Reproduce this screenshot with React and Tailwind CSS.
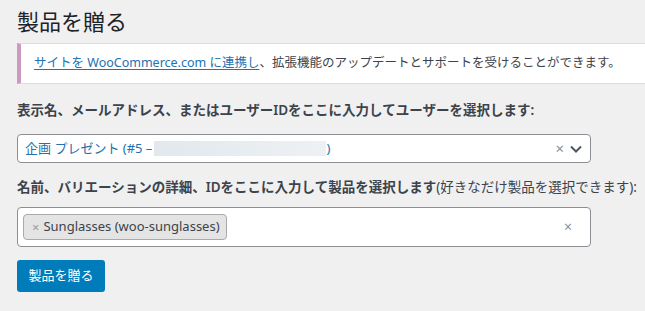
export default function App() {
  const font = { fontFamily: '"Noto Sans", "Noto Sans CJK JP", sans-serif' };

  return (
    <div
      className="w-[645px] h-[311px] overflow-hidden bg-[#f0f0f1] pl-[17px] flex flex-col items-start text-[#1d2327]"
      style={font}
    >
      <h1 className="mt-[7px] text-[22px] leading-[28px] font-normal text-[#1d2327]">製品を贈る</h1>

      <div className="mt-[8px] w-[650px] h-[41px] bg-white border-y border-[#dcdcde] border-l-4 border-l-[#cc99c2] flex items-center pl-[13px] text-[12.5px] text-[#3c434a]">
        <a className="text-[#2271b1] underline underline-offset-2">サイトを WooCommerce.com に連携し</a>
        <span>、拡張機能のアップデートとサポートを受けることができます。</span>
      </div>

      <label className="mt-[16px] text-[13.5px] leading-[20px] font-semibold text-[#3c434a]">
        表示名、メールアドレス、またはユーザーIDをここに入力してユーザーを選択します:
      </label>

      <div className="mt-[14px] w-[574px] h-[29px] bg-white border border-[#8c8f94] rounded-[4px] flex items-center pl-[7px] pr-[6px]">
        <span className="text-[13px] text-[#2271b1] whitespace-nowrap">企画 プレゼント (#5 – </span>
        <span className="ml-[2px] w-[172px] h-[15px] bg-gradient-to-r from-[#e2e8ed] to-[#edf1f4]"></span>
        <span className="text-[13px] text-[#2271b1]">)</span>
        <span className="ml-auto text-[15px] leading-none text-[#8c8f94] mr-[6px]">×</span>
        <svg width="12" height="8" viewBox="0 0 12 8" className="mr-[2px]">
          <path d="M1 1.5 L6 6.5 L11 1.5" fill="none" stroke="#50575e" strokeWidth="2" />
        </svg>
      </div>

      <label className="mt-[14px] text-[13.5px] leading-[20px] text-[#3c434a] whitespace-nowrap">
        <span className="font-semibold">名前、バリエーションの詳細、IDをここに入力して製品を選択します</span>
        <span className="text-[13.5px]">(好きなだけ製品を選択できます):</span>
      </label>

      <div className="mt-[10px] w-[574px] h-[40px] bg-white border border-[#8c8f94] rounded-[4px] flex items-center pl-[5px] pr-[18px]">
        <div className="h-[26px] bg-[#e4e4e4] border border-[#aaa] rounded-[4px] flex items-center pl-[8px] pr-[6px] gap-[4px]">
          <span className="text-[13px] text-[#999] leading-none">×</span>
          <span className="text-[13px] text-[#3c434a]">Sunglasses (woo-sunglasses)</span>
        </div>
        <span className="ml-auto text-[14px] leading-none text-[#8c8f94]">×</span>
      </div>

      <button className="mt-[13px] w-[88px] h-[32px] bg-[#007cba] rounded-[3px] text-white text-[13px]">
        製品を贈る
      </button>
    </div>
  );
}
